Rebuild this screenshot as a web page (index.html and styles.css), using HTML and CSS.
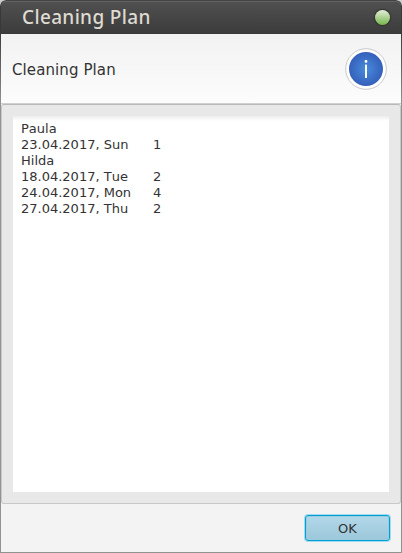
FILE: index.html
```html
<!DOCTYPE html>
<html lang="en">
<head>
<meta charset="utf-8">
<title>Cleaning Plan</title>
<link rel="stylesheet" href="styles.css">
</head>
<body>
<div class="window">
  <div class="titlebar">
    <span class="title">Cleaning Plan</span>
    <span class="close"></span>
  </div>
  <div class="main">
    <div class="pane">
      <div class="header">
        <span class="heading">Cleaning Plan</span>
        <svg class="info" width="42" height="42" viewBox="0 0 42 42">
          <defs>
            <radialGradient id="blue"><stop offset="0" stop-color="#488bdb"/><stop offset="1" stop-color="#3560bb"/></radialGradient>
          </defs>
          <circle cx="21" cy="21" r="20.3" fill="#fff" stroke="#c9c9c9"/>
          <circle cx="21" cy="21" r="17" fill="url(#blue)"/>
          <rect x="19.7" y="12" width="2.6" height="2.7" rx="0.8" fill="#fff"/>
          <rect x="20" y="16.6" width="2" height="13.4" fill="#fff"/>
        </svg>
      </div>
      <div class="content">
        <div class="plan">Paula
23.04.2017, Sun&#9;1
Hilda
18.04.2017, Tue&#9;2
24.04.2017, Mon&#9;4
27.04.2017, Thu&#9;2</div>
      </div>
      <div class="footer"><button class="ok">OK</button></div>
    </div>
  </div>
</div>
</body>
</html>
```
FILE: styles.css
```css
* { box-sizing: border-box; }
body { margin: 0; background: #c9cccb; font-family: "DejaVu Sans", sans-serif; color: #333; }
.window { width: 402px; height: 553px; display: flex; flex-direction: column; border-radius: 6px 6px 0 0; overflow: hidden; }
.titlebar { height: 34px; display: flex; align-items: center; justify-content: space-between; padding: 0 12px 0 21px; border: 1px solid #393939; border-top-color: #434343; border-radius: 6px 6px 0 0; background: linear-gradient(#505050, #3c3c3c); box-shadow: inset 0 1px #636363; }
.title { font: 500 19px/32px "Noto Sans", sans-serif; color: #dfdbd2; letter-spacing: 0.35px; white-space: nowrap; }
.close { width: 15px; height: 15px; border-radius: 50%; background: linear-gradient(#e3efd9, #76b54b); box-shadow: 0 0 1px 1px #303030; margin-right: -1px; }
.main { flex: 1; display: flex; padding: 0 1px 1px; background: linear-gradient(#3c3c3c, #929292 70px); }
.pane { flex: 1; display: flex; flex-direction: column; background: #f3f3f3; }
.header { height: 70px; display: flex; align-items: center; justify-content: space-between; padding: 0 14px 0 11px; border-bottom: 1px solid #d0d0d0; background: linear-gradient(#f2f2f2, #fcfcfc); }
.heading { font-size: 15px; line-height: 20px; margin-top: 2px; letter-spacing: 0.1px; }
.info { display: block; margin-top: 1px; }
.content { height: 400px; padding: 11px; border: 1px solid #c8c8c8; border-top-color: #b8b8b8; border-radius: 3px; background: #e8e8e8; }
.plan { height: 376px; padding: 5px 8px; background: linear-gradient(#ededed, #fff 5px); font-size: 13px; line-height: 16px; white-space: pre; tab-size: 132px; font-kerning: none; }
.footer { flex: 1; display: flex; justify-content: flex-end; align-items: center; padding: 0 11px 0 0; }
.ok { width: 85px; height: 26px; padding: 0; border: 1px solid #039ed3; border-radius: 3px; background: linear-gradient(#b2d9ea, #9cc6da); box-shadow: 0 0 0 1px #a0dcf0, inset 0 0 0 1px #9accdf; font: 13px "DejaVu Sans", sans-serif; color: #333; }
```
